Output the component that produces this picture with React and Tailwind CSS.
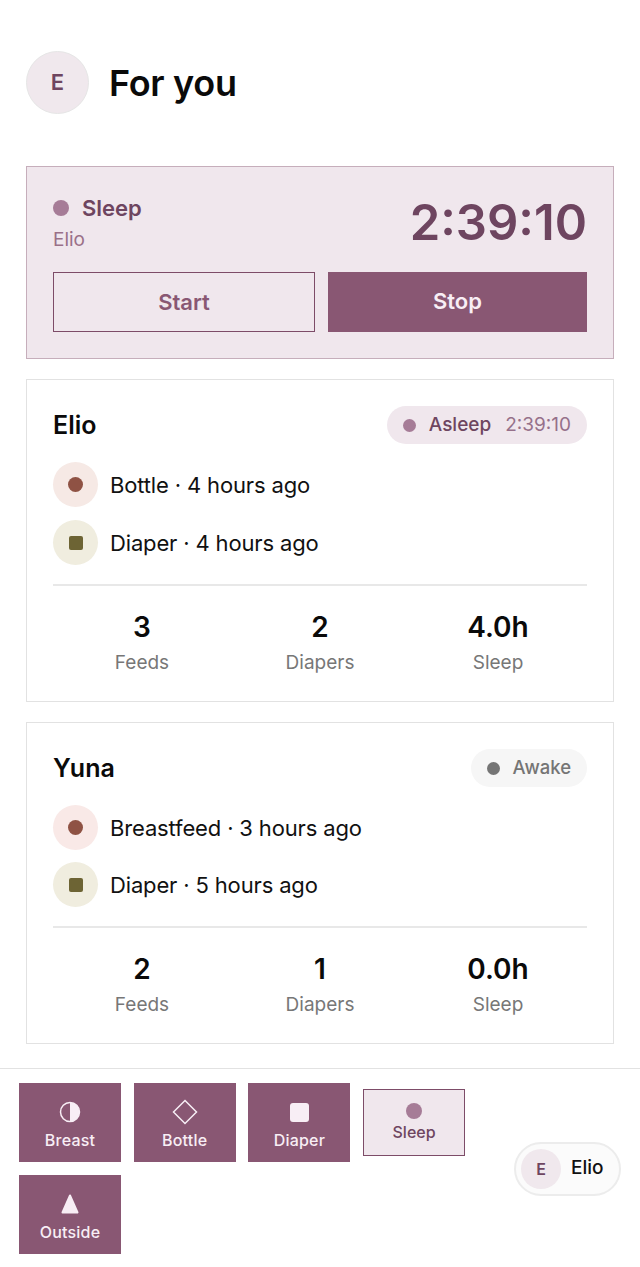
const font = { fontFamily: 'Inter, sans-serif' };

const Dot = ({ className }) => <span className={`block rounded-full ${className}`} />;

const Stat = ({ value, label }) => (
  <div className="flex flex-col items-center">
    <span className="text-[28px] leading-[34px] font-semibold text-[#0a0a0a]">{value}</span>
    <span className="mt-[7px] text-[19px] leading-[24px] text-[#777]">{label}</span>
  </div>
);

const Event = ({ bg, icon, text }) => (
  <div className="flex items-center gap-[12px] h-[45px]">
    <div className={`w-[45px] h-[45px] rounded-full flex items-center justify-center ${bg}`}>{icon}</div>
    <span className="text-[22px] leading-[28px] tracking-[-0.15px] text-[#111]">{text}</span>
  </div>
);

const feedIcon = <Dot className="w-[15px] h-[15px] bg-[#8f5244]" />;
const diaperIcon = <span className="block w-[14px] h-[14px] rounded-[2px] bg-[#6d6434]" />;

const ChildCard = ({ name, badge, events, stats, eventGap }) => (
  <div className="border border-[#e2e2e2] px-[26px] pt-[26px] pb-[26px]">
    <div className="flex items-center justify-between h-[38px]">
      <span className="text-[25px] font-semibold text-[#0a0a0a] mt-[1px]">{name}</span>
      {badge}
    </div>
    <div className={`mt-[18px] flex flex-col ${eventGap}`}>
      {events.map((e) => (
        <Event key={e.text} {...e} />
      ))}
    </div>
    <div className="mt-[19px] border-t-2 border-[#e8e8e8] pt-[24px] grid grid-cols-3">
      {stats.map((s) => (
        <Stat key={s.label} {...s} />
      ))}
    </div>
  </div>
);

const QuickButton = ({ icon, label }) => (
  <button className="w-[102px] h-[79px] bg-[#895773] flex flex-col items-center text-[#f8eef5] pt-[17px]">
    <span className="h-[24px] flex items-center justify-center">{icon}</span>
    <span className="mt-[5px] text-[16px] leading-[22px] font-medium tracking-[0.2px]">{label}</span>
  </button>
);

export default function App() {
  return (
    <div className="bg-white min-h-[1267px] flex flex-col" style={font}>
      <div className="px-[26px]">
        <div className="pt-[51px] flex items-center gap-[20px]">
          <div className="w-[63px] h-[63px] rounded-full bg-[#f0e8ed] border border-[#e6e6e6] flex items-center justify-center text-[22px] font-semibold text-[#6e4560]">
            E
          </div>
          <h1 className="mt-[1px] text-[36px] leading-[44px] font-semibold tracking-[-0.3px] text-[#0a0a0a]">For you</h1>
        </div>

        <div className="mt-[52px] bg-[#f0e7ed] border border-[#c6aebb] px-[26px] pt-[26px] pb-[26px]">
          <div className="flex items-start justify-between h-[76px]">
            <div className="flex flex-col -mt-[2px]">
              <div className="flex items-center gap-[13px] h-[34px]">
                <Dot className="w-[16px] h-[16px] bg-[#a67c97]" />
                <span className="text-[22px] font-semibold text-[#6e4560]">Sleep</span>
              </div>
              <span className="mt-[2px] text-[19px] leading-[26px] text-[#9a7088]">Elio</span>
            </div>
            <span className="mt-[2px] text-[49px] leading-[56px] font-semibold text-[#6e4560]">2:39:10</span>
          </div>
          <div className="mt-[3px] flex gap-[13px]">
            <button className="w-[262px] h-[60px] border border-[#7d4c68] text-[22px] font-semibold text-[#895773]">
              Start
            </button>
            <button className="flex-1 h-[60px] bg-[#895773] text-[22px] font-semibold text-[#f8eef5] pb-[2px]">Stop</button>
          </div>
        </div>

        <div className="mt-[20px] flex flex-col gap-[20px]">
          <ChildCard
            name="Elio"
            eventGap="gap-[13px]"
            badge={
              <div className="h-[38px] rounded-full bg-[#f0e7ed] flex items-center pl-[16px] pr-[16px] text-[19px]">
                <Dot className="w-[13px] h-[13px] bg-[#a67c97]" />
                <span className="ml-[13px] font-medium text-[#6e4560]">Asleep</span>
                <span className="ml-[14px] text-[#96708a]">2:39:10</span>
              </div>
            }
            events={[
              { bg: 'bg-[#f6e9e5]', icon: feedIcon, text: 'Bottle · 4 hours ago' },
              { bg: 'bg-[#f0eddf]', icon: diaperIcon, text: 'Diaper · 4 hours ago' },
            ]}
            stats={[
              { value: '3', label: 'Feeds' },
              { value: '2', label: 'Diapers' },
              { value: '4.0h', label: 'Sleep' },
            ]}
          />
          <ChildCard
            name="Yuna"
            eventGap="gap-[12px]"
            badge={
              <div className="h-[38px] rounded-full bg-[#f6f6f6] flex items-center pl-[16px] pr-[16px] text-[18.5px]">
                <Dot className="w-[13px] h-[13px] bg-[#757575]" />
                <span className="ml-[13px] font-medium text-[#757575]">Awake</span>
              </div>
            }
            events={[
              { bg: 'bg-[#f9e9e7]', icon: feedIcon, text: 'Breastfeed · 3 hours ago' },
              { bg: 'bg-[#f0eddf]', icon: diaperIcon, text: 'Diaper · 5 hours ago' },
            ]}
            stats={[
              { value: '2', label: 'Feeds' },
              { value: '1', label: 'Diapers' },
              { value: '0.0h', label: 'Sleep' },
            ]}
          />
        </div>
      </div>

      <div className="mt-[24px] border-t border-[#e2e2e2] pt-[14px] pl-[19px] pr-[19px] flex items-center justify-between">
        <div className="w-[470px] flex flex-wrap items-center gap-x-[12.7px] gap-y-[13px]">
          <QuickButton
            label="Breast"
            icon={
              <svg width="22" height="22" viewBox="0 0 22 22">
                <circle cx="11" cy="11" r="9.5" fill="none" stroke="#f8eef5" strokeWidth="1.5" />
                <path d="M11 1.5a9.5 9.5 0 0 1 0 19z" fill="#f8eef5" />
              </svg>
            }
          />
          <QuickButton
            label="Bottle"
            icon={
              <svg width="26" height="26" viewBox="0 0 26 26">
                <path d="M13 1.5 24.5 13 13 24.5 1.5 13z" fill="none" stroke="#f8eef5" strokeWidth="1.5" />
              </svg>
            }
          />
          <QuickButton label="Diaper" icon={<span className="block w-[19px] h-[19px] rounded-[3px] bg-[#f8eef5]" />} />
          <button className="w-[102px] h-[67px] bg-[#f0e7ed] border border-[#7d4c68] flex flex-col items-center pt-[13px]">
            <Dot className="w-[16px] h-[16px] bg-[#a67c97]" />
            <span className="mt-[2px] text-[16px] leading-[22px] font-medium text-[#6e4560]">Sleep</span>
          </button>
          <QuickButton
            label="Outside"
            icon={
              <svg width="18" height="20" viewBox="0 0 18 20">
                <path d="M9 1.5 16.5 18.5H1.5z" fill="#f8eef5" stroke="#f8eef5" strokeWidth="2" strokeLinejoin="round" />
              </svg>
            }
          />
        </div>
        <div className="w-[107px] h-[54px] rounded-full bg-[#fbfbfb] border-2 border-[#ececec] flex items-center pl-[5px]">
          <div className="w-[40px] h-[40px] rounded-full bg-[#f0e8ed] flex items-center justify-center text-[16px] font-semibold text-[#6e4560]">
            E
          </div>
          <span className="ml-[10px] text-[19px] font-medium text-[#111]">Elio</span>
        </div>
      </div>
    </div>
  );
}
